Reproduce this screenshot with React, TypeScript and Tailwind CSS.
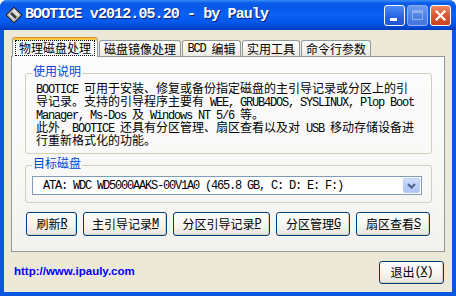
import React from "react";

const LATIN = "font-['Liberation_Mono',monospace] text-[12px] tracking-[-1.2px]";

// SimSun-like text: CJK at 12px, ASCII runs at 6px per char
const Mixed: React.FC<{ text: string }> = ({ text }) => (
  <>
    {text.split(/([\x20-\x7e]+)/).map((part, i) =>
      /[\x20-\x7e]/.test(part) ? (
        <span key={i} className={LATIN}>
          {part}
        </span>
      ) : (
        <React.Fragment key={i}>{part}</React.Fragment>
      )
    )}
  </>
);

const AppIcon = () => (
  <svg width="18" height="18" viewBox="0 0 18 18">
    <polygon points="9,1 17,9 9,17 1,9" fill="#8c8c8c" stroke="#1a1a1a" strokeWidth="1" />
    <polygon points="9,3 15,9 9,15 3,9" fill="#d9d9d9" />
    <polygon points="7,6 12,11 10,13 5,8" fill="#3a3a3a" />
    <line x1="9" y1="4" x2="14" y2="9" stroke="#ffffff" strokeWidth="1" />
    <line x1="6" y1="9" x2="9" y2="12" stroke="#9a9a9a" strokeWidth="1" />
  </svg>
);

const TitleBar = () => (
  <div className="h-[30px] flex items-center pl-[5px] pr-[5px] rounded-t-[7px] bg-[linear-gradient(180deg,#3d8df7_0px,#0a5de8_3px,#0758ec_8px,#0a62f5_14px,#0458ea_22px,#0049d4_27px,#003cb8_30px)]">
    <AppIcon />
    <span className="ml-[2px] font-['Liberation_Mono',monospace] font-bold text-[15px] tracking-[-0.9px] text-white [text-shadow:1px_1px_0_#0a1c76]">
      BOOTICE v2012.05.20 - by Pauly
    </span>
    <div className="ml-auto flex gap-[2px]">
      <div className="w-[21px] h-[21px] rounded-[3px] border border-white bg-[linear-gradient(180deg,#4a8bf8,#2663e4_60%,#1d55d6)] flex items-end pl-[5px] pb-[4px]">
        <div className="w-[7px] h-[3px] bg-white" />
      </div>
      <div className="w-[21px] h-[21px] rounded-[3px] border border-[#8fb0f0] bg-[linear-gradient(180deg,#6e9af0,#4d7fe6_60%,#4575e0)] flex items-center justify-center">
        <div className="w-[11px] h-[10px] border border-[#8fb0f0] border-t-[3px]" />
      </div>
      <div className="w-[21px] h-[21px] rounded-[3px] border border-white bg-[linear-gradient(180deg,#ec8a64,#e0572f_50%,#cb4320)] flex items-center justify-center">
        <svg width="11" height="11" viewBox="0 0 11 11">
          <path d="M1.5 1.5 L9.5 9.5 M9.5 1.5 L1.5 9.5" stroke="#ffffff" strokeWidth="2.2" strokeLinecap="square" />
        </svg>
      </div>
    </div>
  </div>
);

const tabs = [
  { label: "物理磁盘处理", w: "w-[86px]", active: true },
  { label: "磁盘镜像处理", w: "w-[82px]" },
  { label: "BCD 编辑", w: "w-[59px]" },
  { label: "实用工具", w: "w-[58px]" },
  { label: "命令行参数", w: "w-[70px]" },
];

const XpButton: React.FC<{ label: string; accel: string; after?: string; w: string; h: string }> = ({
  label,
  accel,
  after,
  w,
  h,
}) => (
  <div
    className={`${w} ${h} border border-[#003c74] rounded-[3px] bg-[linear-gradient(180deg,#ffffff,#f6f5f0_55%,#e6e4db)] shadow-[inset_-1px_-1px_0_#d8d2c2] flex items-center justify-center whitespace-pre leading-[14px]`}
  >
    <Mixed text={label} />
    <span className={`${LATIN} underline underline-offset-[1px]`}>{accel}</span>
    {after && <Mixed text={after} />}
  </div>
);

const GroupBox: React.FC<{ title: string; className?: string; children: React.ReactNode }> = ({
  title,
  className,
  children,
}) => (
  <fieldset className={`ml-[13px] w-[407px] border border-[#d0d0bf] rounded-[3px] ${className ?? ""}`}>
    <legend className="ml-[6px] px-[1px] pb-[4px] text-[#0046d5] leading-[14px]">{title}</legend>
    {children}
  </fieldset>
);

const descLines = [
  "BOOTICE 可用于安装、修复或备份指定磁盘的主引导记录或分区上的引",
  "导记录。支持的引导程序主要有 WEE, GRUB4DOS, SYSLINUX, Plop Boot",
  "Manager, Ms-Dos 及 Windows NT 5/6 等。",
  "此外, BOOTICE 还具有分区管理、扇区查看以及对 USB 移动存储设备进",
  "行重新格式化的功能。",
];

export default function App() {
  return (
    <div className="w-[456px] h-[296px] bg-white">
      <div className="w-[456px] h-[296px] flex flex-col rounded-t-[7px] bg-[#0a57e0] font-['Noto_Sans_CJK_SC',sans-serif] text-[12px] text-black">
        <TitleBar />

        <div className="flex-1 mx-[4px] mb-[4px] bg-[#ece9d8] flex flex-col pt-[7px]">
          {/* tabs */}
          <div className="flex items-end gap-[1px] pl-[8px] h-[19px]">
            {tabs.map((t) =>
              t.active ? (
                <div
                  key={t.label}
                  className={`${t.w} h-[20px] -mb-[1px] relative z-10 rounded-t-[3px] border-x border-x-[#919b9c] border-t border-t-[#e68b2c] bg-[#fcfcfe] shadow-[inset_0_2px_0_#ffc83c] flex items-center justify-center`}
                >
                  <span className="px-[3px] leading-[14px] border border-dotted border-black whitespace-pre">
                    <Mixed text={t.label} />
                  </span>
                </div>
              ) : (
                <div
                  key={t.label}
                  className={`${t.w} h-[16px] rounded-t-[3px] border-x border-t border-[#919b9c] bg-[linear-gradient(180deg,#ffffff,#f3f2ec_70%,#e9e8e1)] flex items-center justify-center leading-[14px] whitespace-pre`}
                >
                  <Mixed text={t.label} />
                </div>
              )
            )}
          </div>

          {/* tab page */}
          <div className="ml-[7px] w-[434px] h-[196px] border border-[#919b9c] bg-[linear-gradient(180deg,#fcfcfe,#f8f8f6_60%,#f3f2ee)] flex flex-col">
            <GroupBox title="使用说明" className="mt-[7px] pb-[7px]">
              <div className="pl-[10px] -mt-[1px]">
                {descLines.map((line) => (
                  <div key={line} className="h-[13px] leading-[13px] whitespace-pre">
                    <Mixed text={line} />
                  </div>
                ))}
              </div>
            </GroupBox>

            <GroupBox title="目标磁盘" className="mt-[2px] pb-[7px]">
              <div className="ml-[6px] mt-[2px] w-[390px] h-[19px] border border-[#7f9db9] bg-white p-[1px] flex items-center">
                <span className={`${LATIN} flex-1 pl-[9px] whitespace-pre`}>
                  ATA: WDC WD5000AAKS-00V1A0 (465.8 GB, C: D: E: F:)
                </span>
                <div className="w-[17px] h-full rounded-[2px] border border-[#bccdf5] bg-[linear-gradient(180deg,#d2e0fd,#b9cdf8_50%,#aec4f5)] flex items-center justify-center">
                  <svg width="9" height="6" viewBox="0 0 9 6">
                    <path d="M1 1 L4.5 4.5 L8 1" fill="none" stroke="#4d6185" strokeWidth="2" />
                  </svg>
                </div>
              </div>
            </GroupBox>

            <div className="ml-[14px] mt-[9px] flex gap-[6px]">
              <XpButton label="刷新" accel="R" w="w-[51px]" h="h-[24px]" />
              <XpButton label="主引导记录" accel="M" w="w-[84px]" h="h-[24px]" />
              <XpButton label="分区引导记录" accel="P" w="w-[97px]" h="h-[24px]" />
              <XpButton label="分区管理" accel="G" w="w-[74px]" h="h-[24px]" />
              <XpButton label="扇区查看" accel="S" w="w-[74px]" h="h-[24px]" />
            </div>
          </div>

          {/* footer */}
          <div className="flex-1 flex items-center justify-between pl-[10px] pr-[8px]">
            <span className="font-['Liberation_Sans',Arial,sans-serif] font-bold text-[11.5px] text-[#0000ff]">
              http://www.ipauly.com
            </span>
            <XpButton label="退出(" accel="X" after=")" w="w-[65px]" h="h-[23px]" />
          </div>
        </div>
      </div>
    </div>
  );
}
